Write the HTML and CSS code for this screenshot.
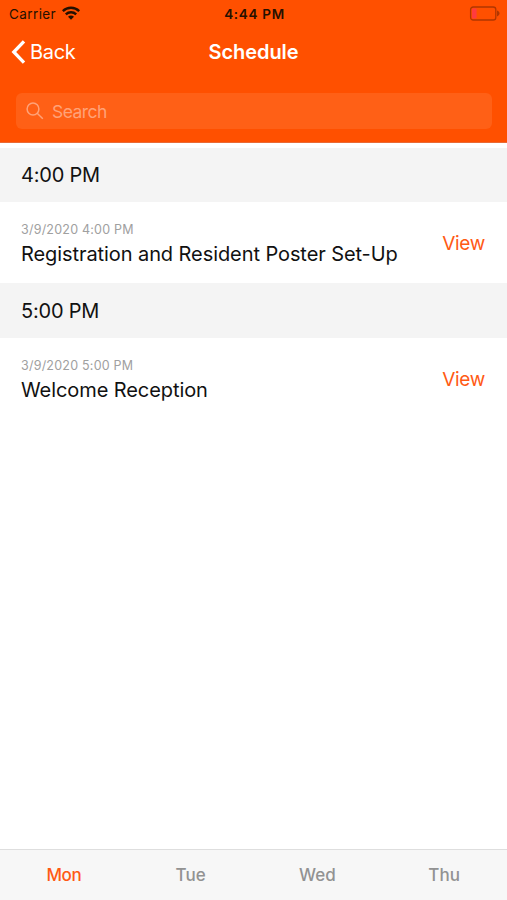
FILE: index.html
```html
<!DOCTYPE html>
<html lang="en">
<head>
<meta charset="utf-8">
<title>Schedule</title>
<link rel="stylesheet" href="styles.css">
</head>
<body>
<header class="header">
  <div class="status">
    <div class="carrier"><span>Carrier</span>
      <svg class="wifi" width="18" height="14" viewBox="0 0 18 14" fill="none" stroke="currentColor" stroke-width="2.4"><path d="M.8 5.1C5.4.7 12.6.7 17.2 5.1M3.8 8.3c2.9-2.8 7.5-2.8 10.4 0"/><path d="M9 13.7 6 10.7c1.7-1.6 4.3-1.6 6 0z" fill="currentColor" stroke="none"/></svg>
    </div>
    <span class="clock">4:44 PM</span>
    <svg class="battery" width="31" height="15" viewBox="0 0 31 15"><rect x="1.6" y="1" width="25.2" height="13" rx="2.6" fill="none" stroke="#b03600" stroke-width="1.3"/><rect x="3" y="2.5" width="4.6" height="10" rx="1" fill="#ff3b3f"/><path d="M28 4.6c3.4 1.4 3.4 4.4 0 5.8z" fill="#b03600"/></svg>
  </div>
  <nav class="nav">
    <a class="back"><svg width="15" height="24" viewBox="0 0 15 24" fill="none" stroke="currentColor" stroke-width="3.3"><path d="M13 1.4 2.8 12 13 22.6"/></svg><span>Back</span></a>
    <h1 class="title">Schedule</h1>
    <span></span>
  </nav>
  <div class="search">
    <svg width="18" height="18" viewBox="0 0 18 18" fill="none" stroke="currentColor" stroke-width="1.5"><circle cx="7" cy="7" r="5.9"/><path d="m11.2 11.2 5.6 5.6"/></svg>
    <span>Search</span>
  </div>
</header>
<main class="list">
  <h2 class="section">4:00 PM</h2>
  <article class="event">
    <div><div class="date">3/9/2020 4:00 PM</div><div class="name">Registration and Resident Poster Set-Up</div></div>
    <a class="view">View</a>
  </article>
  <h2 class="section">5:00 PM</h2>
  <article class="event">
    <div><div class="date">3/9/2020 5:00 PM</div><div class="name">Welcome Reception</div></div>
    <a class="view">View</a>
  </article>
</main>
<footer class="tabs">
  <a class="tab active">Mon</a><a class="tab">Tue</a><a class="tab">Wed</a><a class="tab">Thu</a>
</footer>
</body>
</html>
```
FILE: styles.css
```css
* { box-sizing: border-box; }
body {
  margin: 0;
  height: 900px;
  display: flex;
  flex-direction: column;
  overflow: hidden;
  background: #fff;
  color: #111;
  font-family: Inter, "Liberation Sans", sans-serif;
}
h1, h2 { margin: 0; font-weight: 400; }
svg { display: block; flex: none; }
.header { height: 143px; background: #ff5000; border-bottom: 1px solid #e96a35; }
.status {
  height: 27px;
  display: grid;
  grid-template-columns: 1fr auto 1fr;
  align-items: center;
  padding: 0 7px 0 9px;
  color: #251000;
}
.carrier { display: flex; align-items: center; gap: 6px; font-size: 13.5px; letter-spacing: .4px; }
.wifi { margin-top: -2px; }
.clock { font-size: 13.5px; font-weight: 600; letter-spacing: .7px; }
.battery { justify-self: end; }
.nav {
  height: 50px;
  display: grid;
  grid-template-columns: 1fr auto 1fr;
  align-items: center;
  padding: 0 11px 0 11px;
  color: #fff;
}
.back { display: flex; align-items: center; gap: 4px; font-size: 20px; letter-spacing: -.3px; }
.title { font-size: 20px; font-weight: 600; letter-spacing: -.05px; }
.search {
  height: 36px;
  margin: 16px 15px 0 16px;
  padding-left: 10px;
  display: flex;
  align-items: center;
  gap: 8px;
  border-radius: 6px;
  background: #ff6016;
  color: #ffa278;
  font-size: 17.5px;
  letter-spacing: -.55px;
}
.list { flex: 1; padding-top: 5px; }
.section {
  height: 54px;
  padding-left: 21px;
  background: #f4f4f4;
  font-size: 20px;
  line-height: 55px;
  letter-spacing: -.2px;
}
.event {
  height: 81px;
  display: flex;
  justify-content: space-between;
  padding: 19px 22px 0 21px;
}
.section ~ .section { height: 55px; line-height: 56px; }
.date { font-size: 12.5px; line-height: 17px; letter-spacing: .22px; color: #a0a0a0; }
.name { font-size: 20px; line-height: 32px; letter-spacing: -.08px; }
.view { margin-top: 11px; font-size: 19px; line-height: 24px; letter-spacing: -.3px; color: #ff5a14; }
.tabs {
  height: 51px;
  display: grid;
  grid-template-columns: repeat(4, 1fr);
  border-top: 1px solid #dedede;
  background: #f7f7f7;
}
.tab { padding-left: 1px; text-align: center; font-size: 17px; font-weight: 500; line-height: 50px; color: #929292; }
.active { letter-spacing: -.4px; color: #ff5a14; }
```
